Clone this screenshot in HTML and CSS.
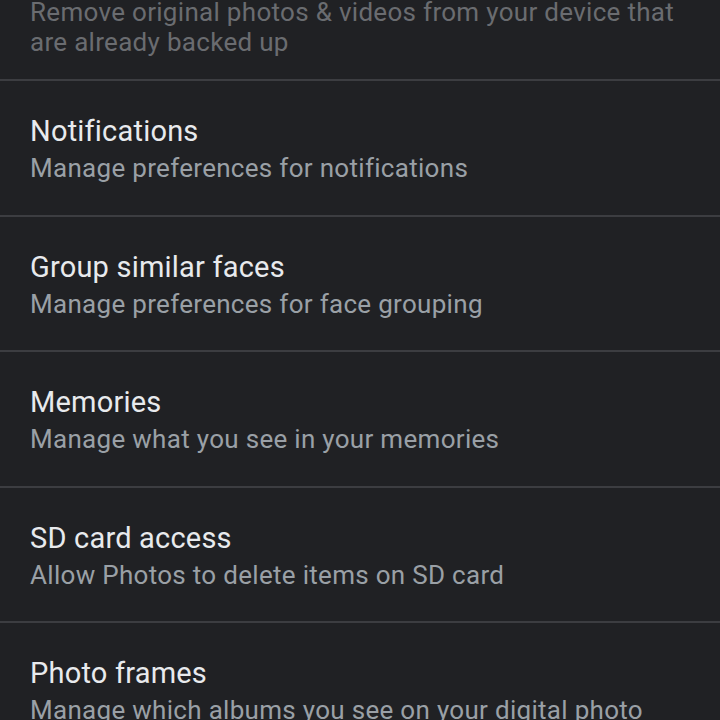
FILE: index.html
```html
<!DOCTYPE html>
<html lang="en">
<head>
    <meta charset="UTF-8">
    <meta name="viewport" content="width=device-width, initial-scale=1.0">
    <title>Photos settings</title>
    <link rel="stylesheet" href="styles.css">
</head>
<body>

    <div class="settings-list">
        <div class="setting-row first disabled">
            <div class="setting-summary">Remove original photos &amp; videos from your device that are already backed up</div>
        </div>

        <div class="setting-row">
            <div class="setting-title">Notifications</div>
            <div class="setting-summary">Manage preferences for notifications</div>
        </div>

        <div class="setting-row">
            <div class="setting-title">Group similar faces</div>
            <div class="setting-summary">Manage preferences for face grouping</div>
        </div>

        <div class="setting-row">
            <div class="setting-title">Memories</div>
            <div class="setting-summary">Manage what you see in your memories</div>
        </div>

        <div class="setting-row">
            <div class="setting-title">SD card access</div>
            <div class="setting-summary">Allow Photos to delete items on SD card</div>
        </div>

        <div class="setting-row">
            <div class="setting-title">Photo frames</div>
            <div class="setting-summary">Manage which albums you see on your digital photo frame</div>
        </div>
    </div>

</body>
</html>
```

FILE: styles.css
```css
html, body {
    height: 100%;
}

body {
    margin: 0;
    font-family: Roboto, "Noto Sans", sans-serif;
    background-color: #202124; /* fond sombre */
    overflow: hidden;
}

.settings-list {
    display: flex;
    flex-direction: column;
}

.setting-row {
    padding: 28px 30px 31.5px 30px;
    border-bottom: 2px solid #3c3d41;
}

.setting-row.first {
    padding-top: 0;
    padding-bottom: 22px;
}

.setting-row.first .setting-summary {
    margin-top: -3px;
}

.setting-title {
    font-size: 29px;
    line-height: 44px;
    letter-spacing: 0.2px;
    color: #e8eaed;
}

.setting-summary {
    font-size: 26px;
    line-height: 30px;
    color: #9aa0a6;
    letter-spacing: 0.3px;
}

.disabled .setting-summary {
    color: #6a6c70; /* option desactivee */
}
```
